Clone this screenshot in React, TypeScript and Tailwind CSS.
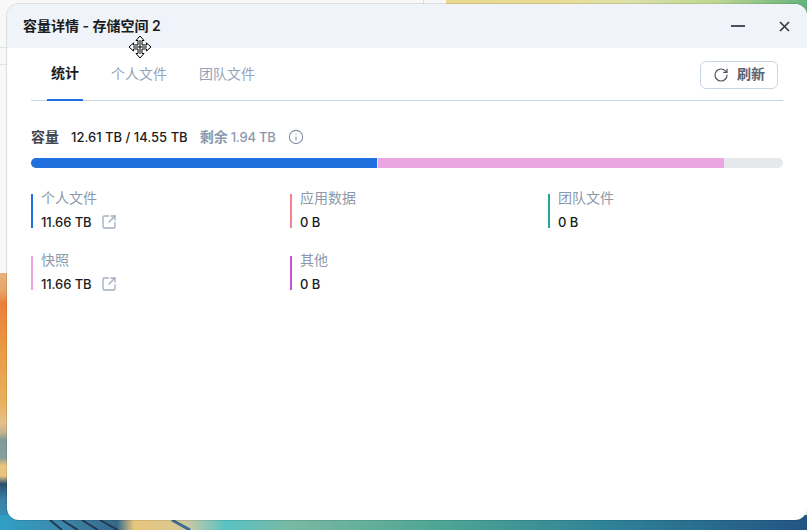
import { Info, RotateCw, SquareArrowOutUpRight } from "lucide-react";

const stats = [
  { label: "个人文件", value: "11.66 TB", color: "bg-[#1f6fde]", link: true },
  { label: "应用数据", value: "0 B", color: "bg-[#f77f92]", link: false },
  { label: "团队文件", value: "0 B", color: "bg-[#26a69a]", link: false },
  { label: "快照", value: "11.66 TB", color: "bg-[#eba6e2]", link: true },
  { label: "其他", value: "0 B", color: "bg-[#c653cf]", link: false },
];

function Wallpaper() {
  return (
    <svg className="absolute inset-0" width="807" height="530" viewBox="0 0 807 530">
      <defs>
        <linearGradient id="side" x1="0" y1="273" x2="0" y2="530" gradientUnits="userSpaceOnUse">
          <stop offset="0" stopColor="#e8b27a" />
          <stop offset="0.07" stopColor="#e8a468" />
          <stop offset="0.12" stopColor="#ec7f38" />
          <stop offset="0.3" stopColor="#eb9a42" />
          <stop offset="0.5" stopColor="#e9b05c" />
          <stop offset="0.58" stopColor="#e6c088" />
          <stop offset="0.62" stopColor="#c8b48c" />
          <stop offset="0.65" stopColor="#7f9a98" />
          <stop offset="0.72" stopColor="#88a09a" />
          <stop offset="0.75" stopColor="#edc67c" />
          <stop offset="0.79" stopColor="#e8c480" />
          <stop offset="0.82" stopColor="#2c4f6e" />
          <stop offset="0.88" stopColor="#3a7fa4" />
          <stop offset="1" stopColor="#2b9cc4" />
        </linearGradient>
        <linearGradient id="bottom" x1="0" y1="0" x2="807" y2="0" gradientUnits="userSpaceOnUse">
          <stop offset="0" stopColor="#2f9fc6" />
          <stop offset="0.06" stopColor="#3a8fb2" />
          <stop offset="0.1" stopColor="#3a7c9e" />
          <stop offset="0.145" stopColor="#33698c" />
          <stop offset="0.166" stopColor="#e7c67c" />
          <stop offset="0.215" stopColor="#dcc88e" />
          <stop offset="0.235" stopColor="#c4c8a8" />
          <stop offset="0.28" stopColor="#58c2c4" />
          <stop offset="0.36" stopColor="#79b9a2" />
          <stop offset="0.55" stopColor="#4da594" />
          <stop offset="0.75" stopColor="#2f8398" />
          <stop offset="1" stopColor="#235584" />
        </linearGradient>
        <linearGradient id="top" x1="446" y1="0" x2="807" y2="0" gradientUnits="userSpaceOnUse">
          <stop offset="0" stopColor="#e9d88e" />
          <stop offset="0.3" stopColor="#e8dc94" />
          <stop offset="0.5" stopColor="#dfe0a8" />
          <stop offset="0.75" stopColor="#bed690" />
          <stop offset="1" stopColor="#64b27e" />
        </linearGradient>
      </defs>
      <rect width="807" height="530" fill="#f8f8f9" />
      <rect x="0" y="273" width="14" height="257" fill="url(#side)" />
      <rect x="0" y="515" width="807" height="15" fill="url(#bottom)" />
      <path d="M50 520 62 530M62 520 78 530M82 520 98 530M100 520 118 530" stroke="#23384f" strokeWidth="2" />
      <path d="M172 520 190 530" stroke="#3c6a8e" strokeWidth="3" />
      <rect x="446" y="0" width="361" height="20" fill="url(#top)" />
      <rect x="423" y="0" width="1" height="4" fill="#dcdde0" />
      <rect x="0" y="47" width="7" height="1" fill="#e1e2e5" />
      <rect x="0" y="64" width="7" height="1" fill="#e1e2e5" />
    </svg>
  );
}

function MoveCursor() {
  return (
    <svg className="absolute left-[128px] top-[35px]" width="24" height="24" viewBox="0 0 24 24">
      <path
        d="M12 1 16 5.500H14V10H18.500V8L23 12 18.500 16V14H14V18.500H16L12 23 8 18.500H10V14H5.500V16L1 12 5.500 8V10H10V5.500H8Z"
        fill="#fff"
        stroke="#000"
        strokeWidth="1"
        strokeLinejoin="round"
      />
      <path d="M12 5V19M5 12H19" stroke="#000" strokeWidth="1" />
    </svg>
  );
}

export default function App() {
  return (
    <div className="relative h-[530px] w-[807px] overflow-hidden font-['Inter','Noto_Sans_CJK_SC',sans-serif]">
      <Wallpaper />

      {/* Window */}
      <div className="absolute left-[7px] top-[4px] flex h-[516px] w-[800px] flex-col overflow-hidden rounded-[12px] bg-white shadow-[0_0_0_1px_rgba(0,0,0,0.1)]">
        <div className="flex h-[44px] items-center justify-between bg-[#f0f3f9] pl-4">
          <span className="-mt-[2px] text-[14px] font-semibold text-[#1a1c20]">容量详情 - 存储空间 2</span>
          <div className="flex items-center">
            <span className="mr-[34px] h-[2px] w-[14px] bg-[#4a5058]" />
            <svg className="mr-[17px]" width="11" height="11" viewBox="0 0 11 11">
              <path d="M1 1 10 10M10 1 1 10" stroke="#33383f" strokeWidth="1.6" />
            </svg>
          </div>
        </div>

        <div className="flex flex-col px-6">
          {/* Tabs */}
          <div className="flex h-[53px] justify-between border-b border-[#c9d5e2]">
            <div className="flex h-full text-[14px]">
              <div className="-mb-px ml-4 flex w-[36px] items-center justify-center border-b-2 border-[#1f6fde] pb-[2px] font-semibold text-[#1a1c20]">统计</div>
              <div className="ml-7 flex items-center pb-[2px] text-[#94a3b8]">个人文件</div>
              <div className="ml-8 flex items-center pb-[2px] text-[#94a3b8]">团队文件</div>
            </div>
            <button className="mb-[11px] mr-[5px] flex h-[28px] w-[78px] items-center justify-center gap-[8px] self-end rounded-md border border-[#c9d5e2] text-[14px] font-semibold leading-[18px] text-[#5b6470]">
              <RotateCw size={16} strokeWidth={1.8} className="text-[#4a5563]" />
              <span className="-mt-[2px]">刷新</span>
            </button>
          </div>

          {/* Capacity */}
          <div className="mt-[26px] flex h-[20px] items-center text-[13px] font-medium leading-[20px]">
            <span className="text-[14px] font-semibold leading-[20px] text-[#3f4650]">容量</span>
            <span className="ml-3 text-[#1a1c20]">12.61 TB / 14.55 TB</span>
            <span className="ml-3 flex text-[#8c99ab]">
              <span className="text-[14px] font-semibold leading-[20px]">剩余</span>
              <span className="ml-[3px] tracking-[-0.2px]">1.94 TB</span>
            </span>
            <Info size={16} strokeWidth={1.7} className="ml-3 text-[#8493a8]" />
          </div>

          <div className="mt-[11px] flex h-[10px] w-[752px] gap-px overflow-hidden rounded-full bg-[#e7e8ec]">
            <div className="w-[346px] bg-[#1f6fde]" />
            <div className="w-[346px] bg-[#eba6e2]" />
          </div>

          {/* Legend */}
          <div className="mt-[26px] grid grid-cols-[259px_258px_1fr] gap-y-[28px]">
            {stats.map((s) => (
              <div key={s.label} className="flex h-[34px] gap-2">
                <span className={`w-[2px] ${s.color}`} />
                <div className="-mt-[4px] flex flex-col gap-2 text-[13px] leading-[16px]">
                  <span className="text-[14px] text-[#8c99ab]">{s.label}</span>
                  <span className="flex items-center font-medium tracking-[-0.1px] text-[#1a1c20]">
                    {s.value}
                    {s.link && <SquareArrowOutUpRight size={16} strokeWidth={2} className="ml-[10px] text-[#a3aec0]" />}
                  </span>
                </div>
              </div>
            ))}
          </div>
        </div>
      </div>

      <MoveCursor />
    </div>
  );
}
